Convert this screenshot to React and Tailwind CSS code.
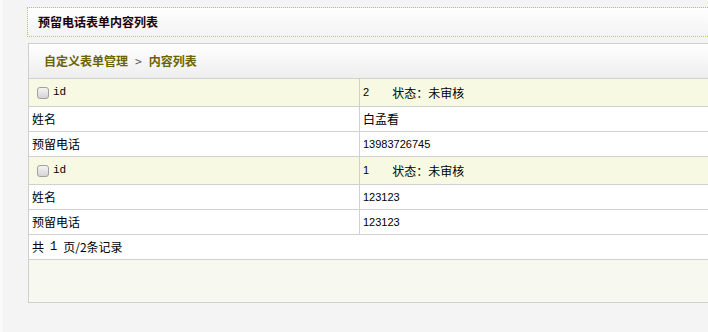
import React from "react";

function Check() {
  return (
    <span className="inline-block w-[12px] h-[12px] rounded-[3px] border border-[#a0a0a0] bg-gradient-to-b from-[#f4f4f4] to-[#d4d4d4] align-middle" />
  );
}

function IdRow({ id }) {
  return (
    <div className="flex h-[28px] border-b border-[#d0d0d0] bg-[#f7f9e3]">
      <div className="w-[331px] border-r border-[#d0d0d0] flex items-center pl-[8px]">
        <Check />
        <span className="ml-[4px] text-[11px] text-black" style={{ fontFamily: '"Liberation Mono",monospace' }}>id</span>
      </div>
      <div className="flex-1 flex items-center pl-[3px] text-black">
        <span className="text-[11px] font-['Liberation_Sans',sans-serif]">{id}</span>
        <span className="ml-[23px] text-[12px] font-['Noto_Sans_CJK_SC',sans-serif]">状态：未审核</span>
      </div>
    </div>
  );
}

function Row({ label, value, big }) {
  return (
    <div className="flex h-[25px] border-b border-[#d0d0d0] bg-white">
      <div className="w-[331px] border-r border-[#d0d0d0] flex items-center pl-[3px] text-[12px] text-black font-['Noto_Sans_CJK_SC',sans-serif]">
        {label}
      </div>
      <div
        className={
          big
            ? "flex-1 flex items-center pl-[3px] text-[12px] text-black font-['Noto_Sans_CJK_SC',sans-serif]"
            : "flex-1 flex items-center pl-[3px] text-[11px] text-black font-['Liberation_Sans',sans-serif]"
        }
      >
        {value}
      </div>
    </div>
  );
}

export default function App() {
  return (
    <div className="min-h-screen bg-[#f4f4f4] flex">
      <div className="w-[3px] bg-[#f9f9f9]" />
      <div className="flex-1 pl-[24px] pt-[7px]">
        <div className="h-[30px] border border-r-0 border-dotted border-[#a9cf3c] bg-gradient-to-b from-white to-[#f3f3f3] flex items-center pl-[10px]">
          <span className="text-[12px] font-bold text-[#200000] font-['Noto_Sans_CJK_SC',sans-serif]">预留电话表单内容列表</span>
        </div>
        <div className="mt-[6px] ml-[1px] border border-r-0 border-[#cfcfcf]">
          <div className="h-[35px] border-b border-[#d0d0d0] bg-gradient-to-b from-white to-[#eeeeee] flex items-center pl-[15px] text-[12px] font-bold text-[#6a6300] font-['Noto_Sans_CJK_SC',sans-serif]">
            自定义表单管理<span className="mx-[7px] font-normal text-[#555]">&gt;</span>内容列表
          </div>
          <IdRow id="2" />
          <Row label="姓名" value="白孟看" big />
          <Row label="预留电话" value="13983726745" />
          <IdRow id="1" />
          <Row label="姓名" value="123123" />
          <Row label="预留电话" value="123123" />
          <div className="h-[25px] border-b border-[#d0d0d0] bg-white flex items-center pl-[3px] text-[12px] text-black font-['Noto_Sans_CJK_SC',sans-serif]">
            共<span className="mx-[6px] font-['Liberation_Mono',monospace]">1</span>页/2条记录
          </div>
          <div className="h-[42px] bg-[#f7f9f0]" />
        </div>
      </div>
    </div>
  );
}
